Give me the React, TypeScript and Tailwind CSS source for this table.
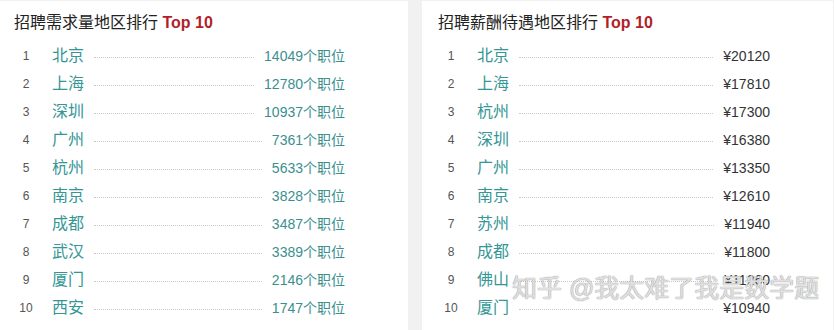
const demand = [
  { city: '北京', value: '14049个职位' },
  { city: '上海', value: '12780个职位' },
  { city: '深圳', value: '10937个职位' },
  { city: '广州', value: '7361个职位' },
  { city: '杭州', value: '5633个职位' },
  { city: '南京', value: '3828个职位' },
  { city: '成都', value: '3487个职位' },
  { city: '武汉', value: '3389个职位' },
  { city: '厦门', value: '2146个职位' },
  { city: '西安', value: '1747个职位' },
];

const salary = [
  { city: '北京', value: '¥20120' },
  { city: '上海', value: '¥17810' },
  { city: '杭州', value: '¥17300' },
  { city: '深圳', value: '¥16380' },
  { city: '广州', value: '¥13350' },
  { city: '南京', value: '¥12610' },
  { city: '苏州', value: '¥11940' },
  { city: '成都', value: '¥11800' },
  { city: '佛山', value: '¥11260' },
  { city: '厦门', value: '¥10940' },
];

interface RankCardProps {
  title: string;
  rows: { city: string; value: string }[];
  valueClass: string;
  titleClass: string;
  rowsClass: string;
}

function RankCard({ title, rows, valueClass, titleClass, rowsClass }: RankCardProps) {
  return (
    <div className="bg-white h-full">
      <h3 className={`pt-[10px] h-[34px] text-[16px] leading-[24px] text-[#222] font-normal ${titleClass}`}>
        {title} <span className="font-bold text-[#b01f2a]">Top 10</span>
      </h3>
      <ul className={`mt-[7px] ${rowsClass}`}>
        {rows.map((r, i) => (
          <li key={r.city} className="flex items-center h-[28px]">
            <span className="w-[24px] text-center text-[12px] text-[#555]">{i + 1}</span>
            <span className="ml-[14px] text-[16px] leading-[20px] text-[#359696]">{r.city}</span>
            <span className="flex-1 mx-[10px] border-t border-dotted border-[#c8c8c8] translate-y-[1px]" />
            <span className={`text-[14px] leading-[20px] ${valueClass}`}>{r.value}</span>
          </li>
        ))}
      </ul>
    </div>
  );
}

export default function App() {
  return (
    <div
      className="relative w-[834px] h-[330px] bg-[#f1f1f1] pt-px flex gap-[14px] overflow-hidden"
      style={{ fontFamily: '"Liberation Sans", "Noto Sans CJK SC", sans-serif' }}
    >
      <div className="w-[408px]">
        <RankCard
          title="招聘需求量地区排行"
          rows={demand}
          valueClass="text-[#3a8f8f]"
          titleClass="pl-[14px]"
          rowsClass="pl-[14px] w-[345px]"
        />
      </div>
      <div className="w-[411px]">
        <RankCard
          title="招聘薪酬待遇地区排行"
          rows={salary}
          valueClass="text-[#333]"
          titleClass="pl-[16px]"
          rowsClass="pl-[17px] w-[348px]"
        />
      </div>

      {/* 知乎 watermark */}
      <div
        className="absolute left-[512px] top-[272px] text-[25px] leading-[32px] text-white/70 whitespace-nowrap"
        style={{ textShadow: '0 0 1px #999, 0 0 1px #999' }}
      >
        知乎 @我太难了我是数学题
      </div>
    </div>
  );
}
